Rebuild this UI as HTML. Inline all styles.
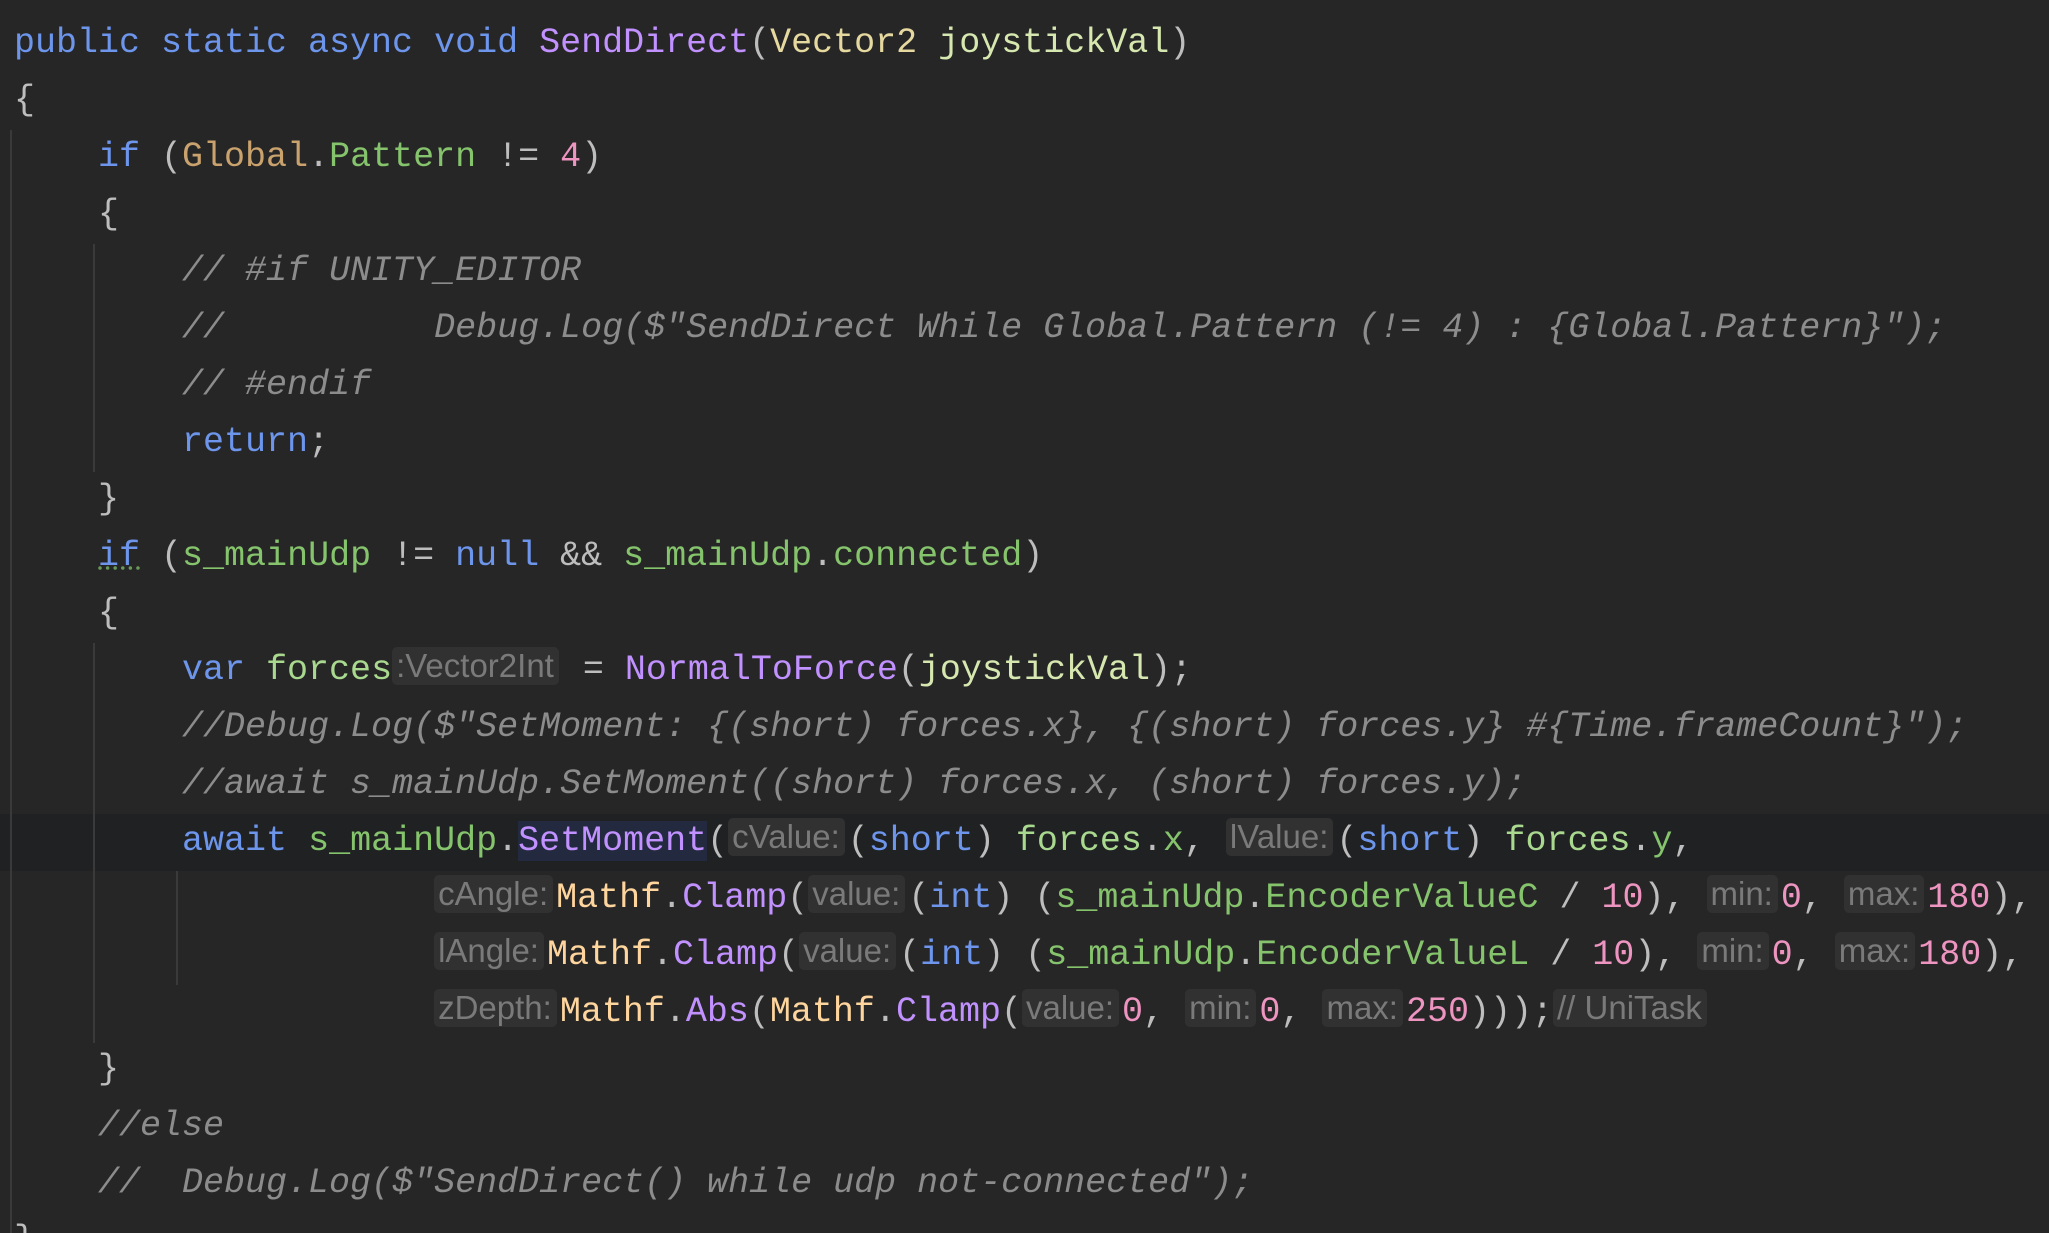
<!DOCTYPE html>
<html><head><meta charset="utf-8"><style>
html,body{margin:0;padding:0;background:#262626;width:2049px;height:1233px;overflow:hidden}
.ed{position:absolute;left:0;top:0;width:2049px;height:1233px;overflow:hidden}
.l{position:absolute;left:14px;height:57px;line-height:57px;white-space:pre;font-family:"Liberation Mono",monospace;font-size:35px;color:#bdbdbd}
.k{color:#6c95eb}.m{color:#c191ff}.t{color:#e6d9a0}.g{color:#c9a26d}.f{color:#85c46c}.n{color:#ed94c0}
.c{color:#8c8c8c;font-style:italic}.o{color:#ffd59e}.v{color:#a9d88f}.p{color:#d6e8b0}
.h{display:inline-block;font-family:"Liberation Sans Narrow","Liberation Sans",sans-serif;font-size:33px;font-style:normal;color:#7a7a7a;background:#313131;border-radius:5px;line-height:38px;padding:0 5px 0 4px;vertical-align:2px;margin-right:3px}
.hl{position:absolute;left:0;top:814px;width:2049px;height:57px;background:#1f2123}
.sel{background:#232a3f}
.gd{position:absolute;width:2px;background:#3a3a3a}
</style></head><body><div class="ed">
<div class="hl"></div>
<div class="gd" style="left:10px;top:130px;height:1106px"></div>
<div class="gd" style="left:93px;top:244px;height:228px"></div>
<div class="gd" style="left:93px;top:643px;height:400px"></div>
<div class="gd" style="left:176px;top:871px;height:114px"></div>
<div class="l" style="top:15px"><span class="k">public static async void </span><span class="m">SendDirect</span>(<span class="t">Vector2 </span><span class="p">joystickVal</span>)</div>
<div class="l" style="top:72px">{</div>
<div class="l" style="top:129px">    <span class="k">if</span> (<span class="g">Global</span>.<span class="f">Pattern</span> != <span class="n">4</span>)</div>
<div class="l" style="top:186px">    {</div>
<div class="l c" style="top:243px">        // #if UNITY_EDITOR</div>
<div class="l c" style="top:300px">        //          Debug.Log($"SendDirect While Global.Pattern (!= 4) : {Global.Pattern}");</div>
<div class="l c" style="top:357px">        // #endif</div>
<div class="l" style="top:414px">        <span class="k">return</span>;</div>
<div class="l" style="top:471px">    }</div>
<div class="l" style="top:528px">    <span class="k" style="text-decoration:underline dotted #6a9a5a">if</span> (<span class="f">s_mainUdp</span> != <span class="k">null</span> &amp;&amp; <span class="f">s_mainUdp</span>.<span class="f">connected</span>)</div>
<div class="l" style="top:585px">    {</div>
<div class="l" style="top:642px">        <span class="k">var </span><span class="v">forces</span><span class="h">:Vector2Int</span> = <span class="m">NormalToForce</span>(<span class="p">joystickVal</span>);</div>
<div class="l c" style="top:699px">        //Debug.Log($"SetMoment: {(short) forces.x}, {(short) forces.y} #{Time.frameCount}");</div>
<div class="l c" style="top:756px">        //await s_mainUdp.SetMoment((short) forces.x, (short) forces.y);</div>
<div class="l" style="top:813px">        <span class="k">await </span><span class="f">s_mainUdp</span>.<span class="m sel">SetMoment</span>(<span class="h">cValue:</span>(<span class="k">short</span>) <span class="v">forces</span>.<span class="f">x</span>, <span class="h">lValue:</span>(<span class="k">short</span>) <span class="v">forces</span>.<span class="f">y</span>,</div>
<div class="l" style="top:870px">                    <span class="h">cAngle:</span><span class="o">Mathf</span>.<span class="m">Clamp</span>(<span class="h">value:</span>(<span class="k">int</span>) (<span class="f">s_mainUdp</span>.<span class="f">EncoderValueC</span> / <span class="n">10</span>), <span class="h">min:</span><span class="n">0</span>, <span class="h">max:</span><span class="n">180</span>),</div>
<div class="l" style="top:927px">                    <span class="h">lAngle:</span><span class="o">Mathf</span>.<span class="m">Clamp</span>(<span class="h">value:</span>(<span class="k">int</span>) (<span class="f">s_mainUdp</span>.<span class="f">EncoderValueL</span> / <span class="n">10</span>), <span class="h">min:</span><span class="n">0</span>, <span class="h">max:</span><span class="n">180</span>),</div>
<div class="l" style="top:984px">                    <span class="h">zDepth:</span><span class="o">Mathf</span>.<span class="m">Abs</span>(<span class="o">Mathf</span>.<span class="m">Clamp</span>(<span class="h">value:</span><span class="n">0</span>, <span class="h">min:</span><span class="n">0</span>, <span class="h">max:</span><span class="n">250</span>)));<span class="h">// UniTask</span></div>
<div class="l" style="top:1041px">    }</div>
<div class="l c" style="top:1098px">    //else</div>
<div class="l c" style="top:1155px">    //  Debug.Log($"SendDirect() while udp not-connected");</div>
<div class="l" style="top:1212px">}</div>
</div></body></html>
